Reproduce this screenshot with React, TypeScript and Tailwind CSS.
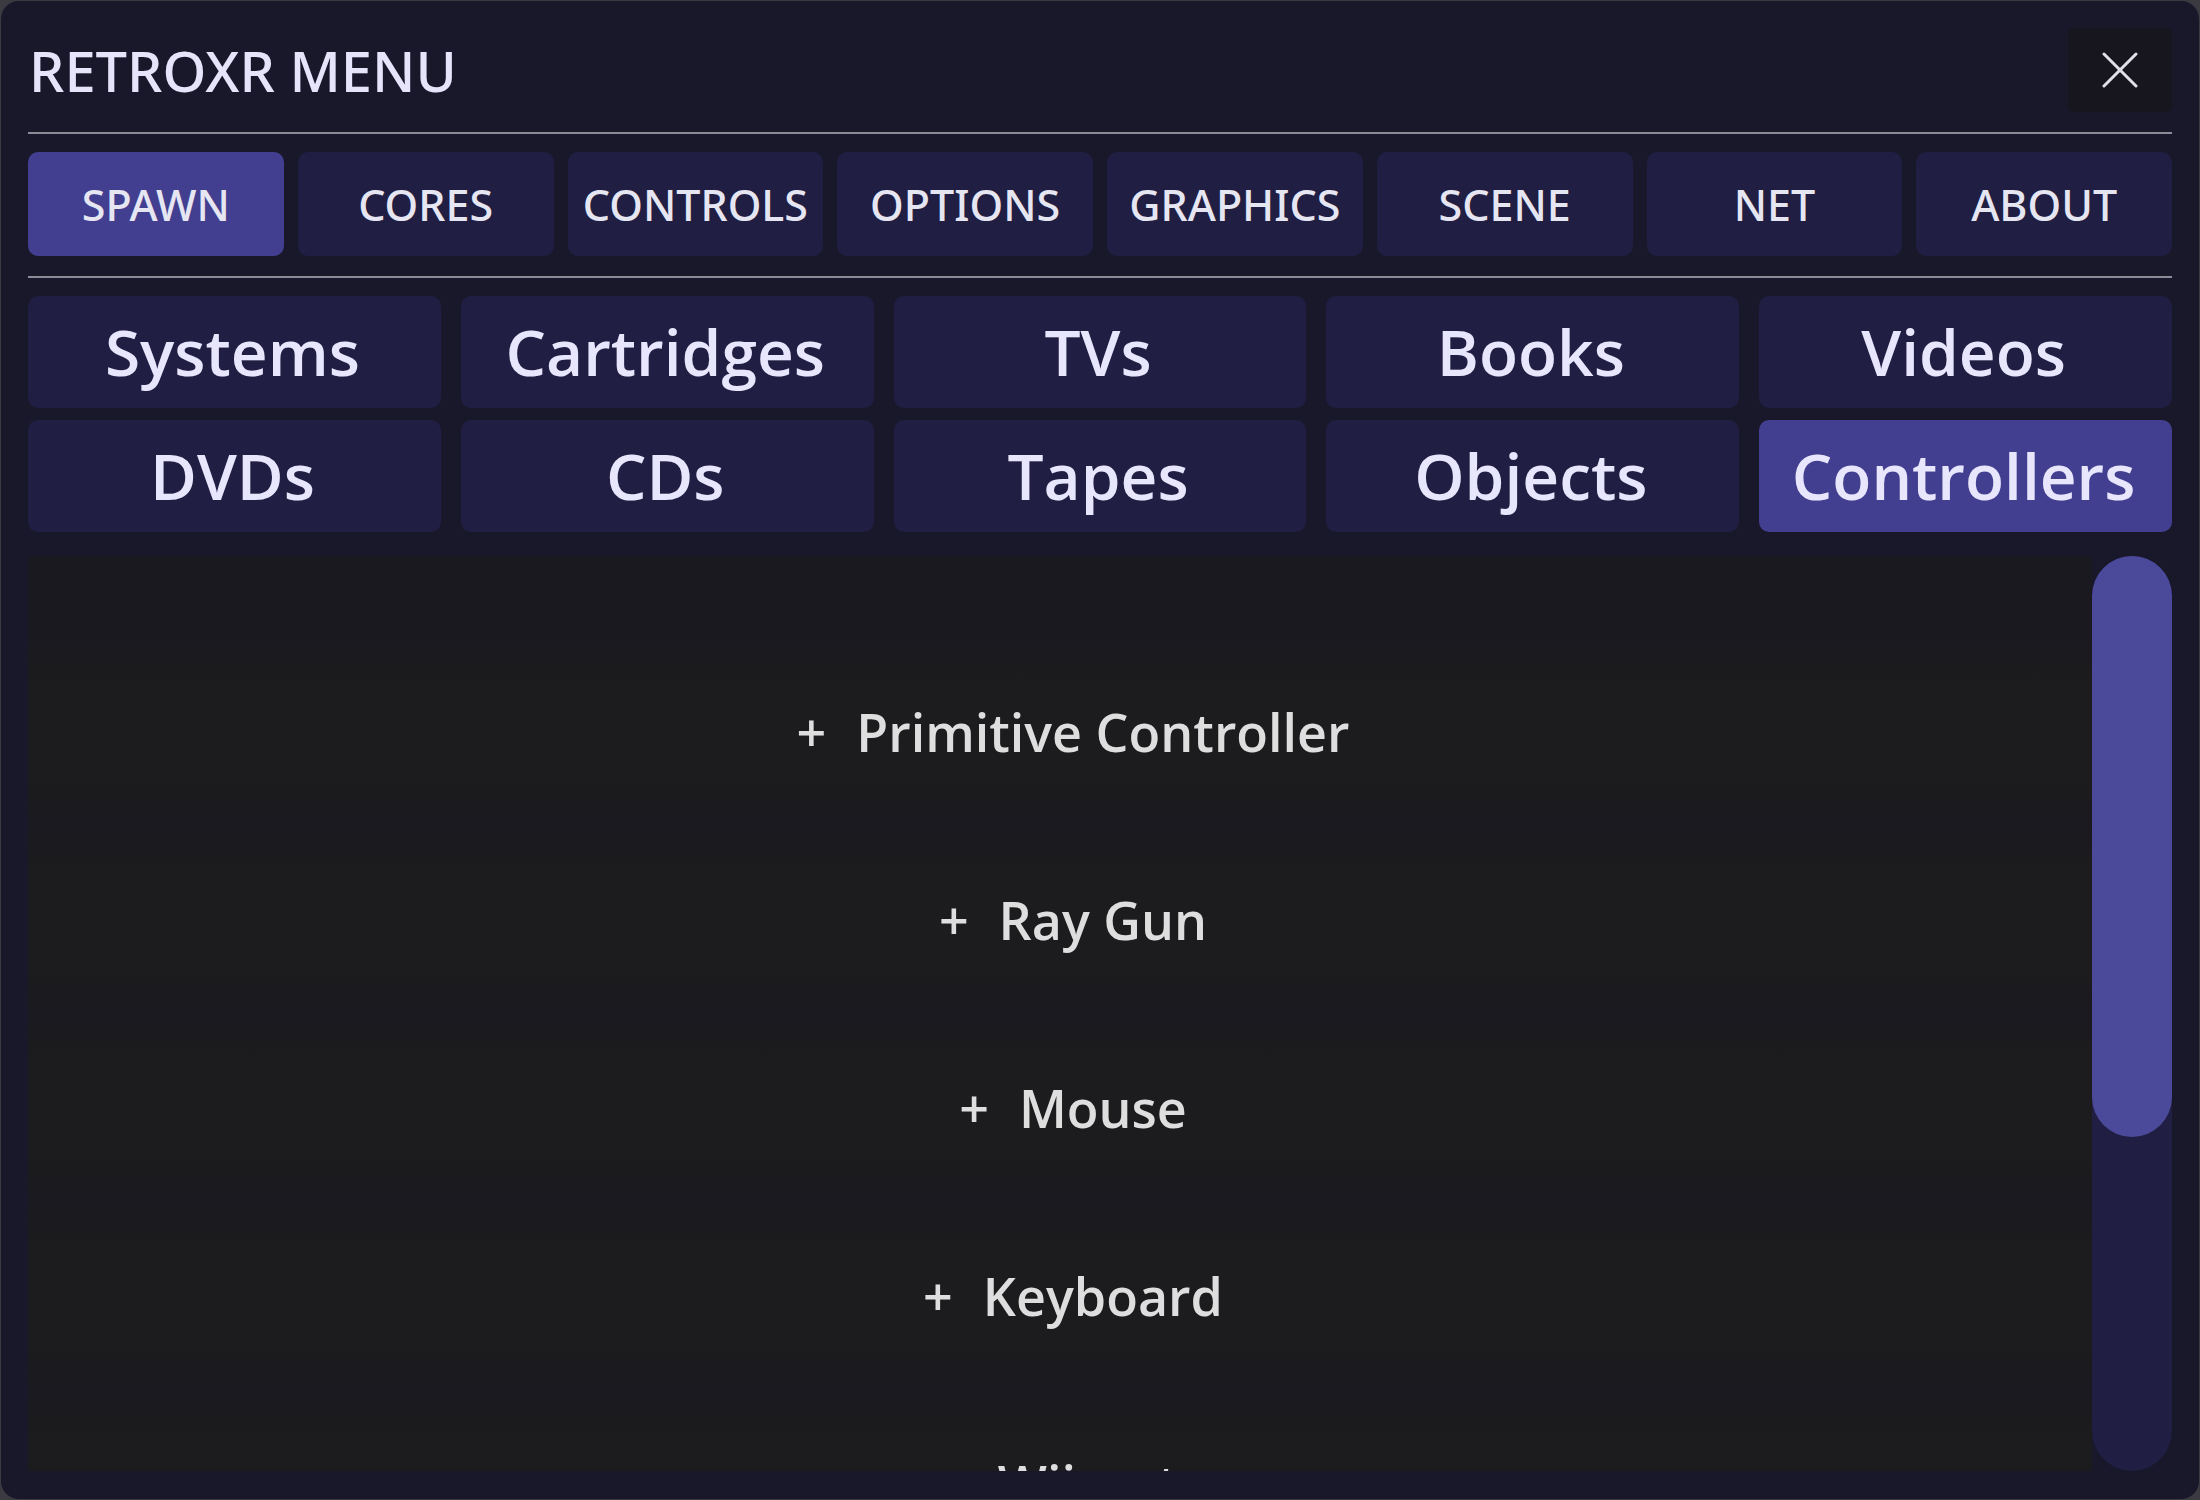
const tabs = ['SPAWN', 'CORES', 'CONTROLS', 'OPTIONS', 'GRAPHICS', 'SCENE', 'NET', 'ABOUT']
const categories = ['Systems', 'Cartridges', 'TVs', 'Books', 'Videos', 'DVDs', 'CDs', 'Tapes', 'Objects', 'Controllers']
const items = ['Primitive Controller', 'Ray Gun', 'Mouse', 'Keyboard', 'Wiimote']

function CloseIcon() {
  return (
    <svg width="36" height="36" viewBox="0 0 36 36" fill="none">
      <path d="M2 2L34 34M34 2L2 34" stroke="#e2e2e6" strokeWidth="3" strokeLinecap="round" />
    </svg>
  )
}

export default function App() {
  return (
    <div className="w-[2200px] h-[1500px] bg-[#3a3a40] p-[1px] font-['Open_Sans','Noto_Sans',sans-serif]">
      <div className="h-full rounded-[18px] bg-[#19182a] px-[27px] pt-[27px] pb-[28px] flex flex-col">
        {/* header */}
        <div className="flex items-center justify-between h-[84px] shrink-0">
          <h1 className="font-['Noto_Sans','Open_Sans',sans-serif] text-[56px] font-medium leading-none text-[#e6e4fb] pl-[1px]">RETROXR MENU</h1>
          <button className="w-[104px] h-[84px] rounded-[6px] bg-[#17161f] flex items-center justify-center">
            <CloseIcon />
          </button>
        </div>
        <div className="h-[2px] bg-[#8b8a96] mt-[20px] shrink-0" />

        {/* main tabs */}
        <div className="grid grid-cols-8 gap-[14px] mt-[18px] shrink-0">
          {tabs.map((t, i) => (
            <button
              key={t}
              className={`h-[104px] rounded-[10px] font-['Noto_Sans','Open_Sans',sans-serif] text-[43px] font-medium leading-none text-[#e6e6f3] flex items-center justify-center ${
                i === 0 ? 'bg-[#433f90]' : 'bg-[#201e42]'
              }`}
            >
              {t}
            </button>
          ))}
        </div>
        <div className="h-[2px] bg-[#8b8a96] mt-[20px] shrink-0" />

        {/* spawn categories */}
        <div className="grid grid-cols-5 gap-x-[20px] gap-y-[12px] mt-[18px] shrink-0">
          {categories.map((c) => (
            <button
              key={c}
              className={`h-[112px] rounded-[10px] text-[64px] font-semibold leading-none text-[#e8e6fc] flex items-center justify-center pr-[4px] ${
                c === 'Controllers' ? 'bg-[#433f90]' : 'bg-[#201e42]'
              }`}
            >
              {c}
            </button>
          ))}
        </div>

        {/* item list */}
        <div className="flex mt-[24px] flex-1 min-h-0">
          <div className="flex-1 bg-[#19191f] overflow-hidden pt-[82px]">
            {items.map((it) => (
              <div
                key={it}
                className="h-[188px] pl-[26px] flex items-center justify-center text-[52px] leading-none text-[#dededf] bg-[linear-gradient(#19191f,#1c1c1e_22%,#1c1c1e_78%,#19191f)]"
              >
                <span className="font-semibold">+</span>
                <span className="ml-[30px] font-semibold">{it}</span>
              </div>
            ))}
          </div>
          <div className="w-[80px] rounded-full bg-[#201e42] flex flex-col">
            <div className="h-[581px] rounded-full bg-[#4b4a9a]" />
          </div>
        </div>
      </div>
    </div>
  )
}
